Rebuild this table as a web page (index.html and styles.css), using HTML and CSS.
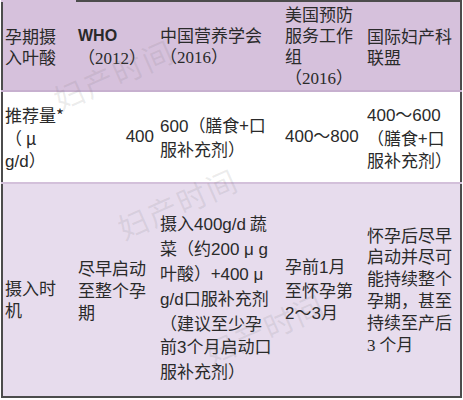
FILE: index.html
```html
<!DOCTYPE html>
<html lang="zh">
<head>
<meta charset="utf-8">
<link rel="stylesheet" href="styles.css">
</head>
<body>
<div class="sheet">
  <table class="folic">
    <colgroup>
      <col class="c1"><col class="c2"><col class="c3"><col class="c4"><col class="c5">
    </colgroup>
    <tr class="r-head">
      <td class="first">孕期摄<br>入叶酸</td>
      <td class="top"><span class="lat b">WHO</span><br><span class="yr">（2012）</span></td>
      <td class="top">中国营养学会<br><span class="yr">（2016）</span></td>
      <td class="top">美国预防<br>服务工作<br>组<br><span class="yr">（2016）</span></td>
      <td class="top">国际妇产科<br>联盟</td>
    </tr>
    <tr class="r-mid">
      <td><div class="lead-mid">推荐量*<br>（ μ<br><span class="lat">g/d</span>）</div></td>
      <td class="right lat">400</td>
      <td><span class="lat">600</span>（膳食+口<br>服补充剂）</td>
      <td class="lat">400～800</td>
      <td><span class="lat">400～600</span><br>（膳食+口<br>服补充剂）</td>
    </tr>
    <tr class="r-low">
      <td><div class="lead-low">摄入时<br>机</div></td>
      <td>尽早启动<br>至整个孕<br>期</td>
      <td><div class="tall">摄入<span class="lat">400g/d</span> 蔬<br>菜（约<span class="lat">200 μ g</span><br>叶酸）+<span class="lat">400 μ</span><br><span class="lat">g/d</span>口服补充剂<br>（建议至少孕<br>前<span class="lat">3</span>个月启动口<br>服补充剂）</div></td>
      <td>孕前<span class="lat">1</span>月<br>至怀孕第<br><span class="lat">2～3</span>月</td>
      <td class="snug">怀孕后尽早<br>启动并尽可<br>能持续整个<br>孕期，甚至<br>持续至产后<br><span class="yr">3</span> 个月</td>
    </tr>
  </table>
  <span class="wm wm1">妇产时间</span>
  <span class="wm wm2">妇产时间</span>
  <span class="wm wm3">妇产时间</span>
</div>
</body>
</html>
```

FILE: styles.css
```css
html, body {
  margin: 0;
  padding: 0;
  background: #ffffff;
}

.sheet {
  position: relative;
  width: 463px;
  height: 400px;
  overflow: hidden;
  font-family: "Noto Sans CJK SC", "Noto Sans", sans-serif;
  color: #2a2a2a;
}

.folic {
  table-layout: fixed;
  border-collapse: collapse;
  width: 461px;
  margin-left: 1px;
  border-left: 2px solid #4c4c4c;
  border-right: 2px solid #4c4c4c;
  border-bottom: 2px solid #4c4c4c;
}

.c1 { width: 74px; }
.c2 { width: 80px; }
.c3 { width: 126px; }
.c4 { width: 83px; }
.c5 { width: 96px; }

.folic td {
  padding: 0 2px 0 2px;
  vertical-align: middle;
  font-size: 17px;
  line-height: 22px;
  white-space: nowrap;
  overflow: visible;
}

.folic td:nth-child(3) { padding-left: 4px; }
.folic td:nth-child(4) { padding-left: 3px; }
.folic td:nth-child(5) { padding-left: 2px; }

.r-head td {
  height: 88px;
  background: #d6c1dc;
  border-bottom: 2px solid #c7b0cf;
  line-height: 21px;
}

.r-head td.top {
  border-top: 2px solid #4c4c4c;
}

.r-head td.first {
  border-top: 2px solid #d6c1dc;
}

.r-mid td {
  height: 90px;
  background: #ffffff;
  border-bottom: 2px solid #d3c0da;
}

.lead-mid {
  padding-top: 4px;
  line-height: 22.5px;
}

.r-low td {
  height: 212px;
  background: #e7dced;
}

.lead-low {
  padding-top: 18px;
}

.tall {
  padding-top: 12px;
  line-height: 23px;
}

.r-low td.snug {
  line-height: 21.8px;
}

.lat {
  font-family: "Liberation Sans", "Noto Sans CJK SC", sans-serif;
  font-size: 17px;
}

.b {
  font-weight: bold;
  font-size: 16px;
}

.yr {
  font-family: "Liberation Serif", "Noto Sans CJK SC", serif;
}

.right {
  text-align: right;
}

.wm {
  position: absolute;
  font-size: 30px;
  letter-spacing: 2px;
  color: rgba(110, 110, 110, 0.13);
  transform: rotate(-24deg);
  transform-origin: left bottom;
  white-space: nowrap;
  pointer-events: none;
}

.wm1 { left: 64px; top: 76px; }
.wm2 { left: 128px; top: 205px; }
.wm3 { left: 215px; top: 330px; }
```
